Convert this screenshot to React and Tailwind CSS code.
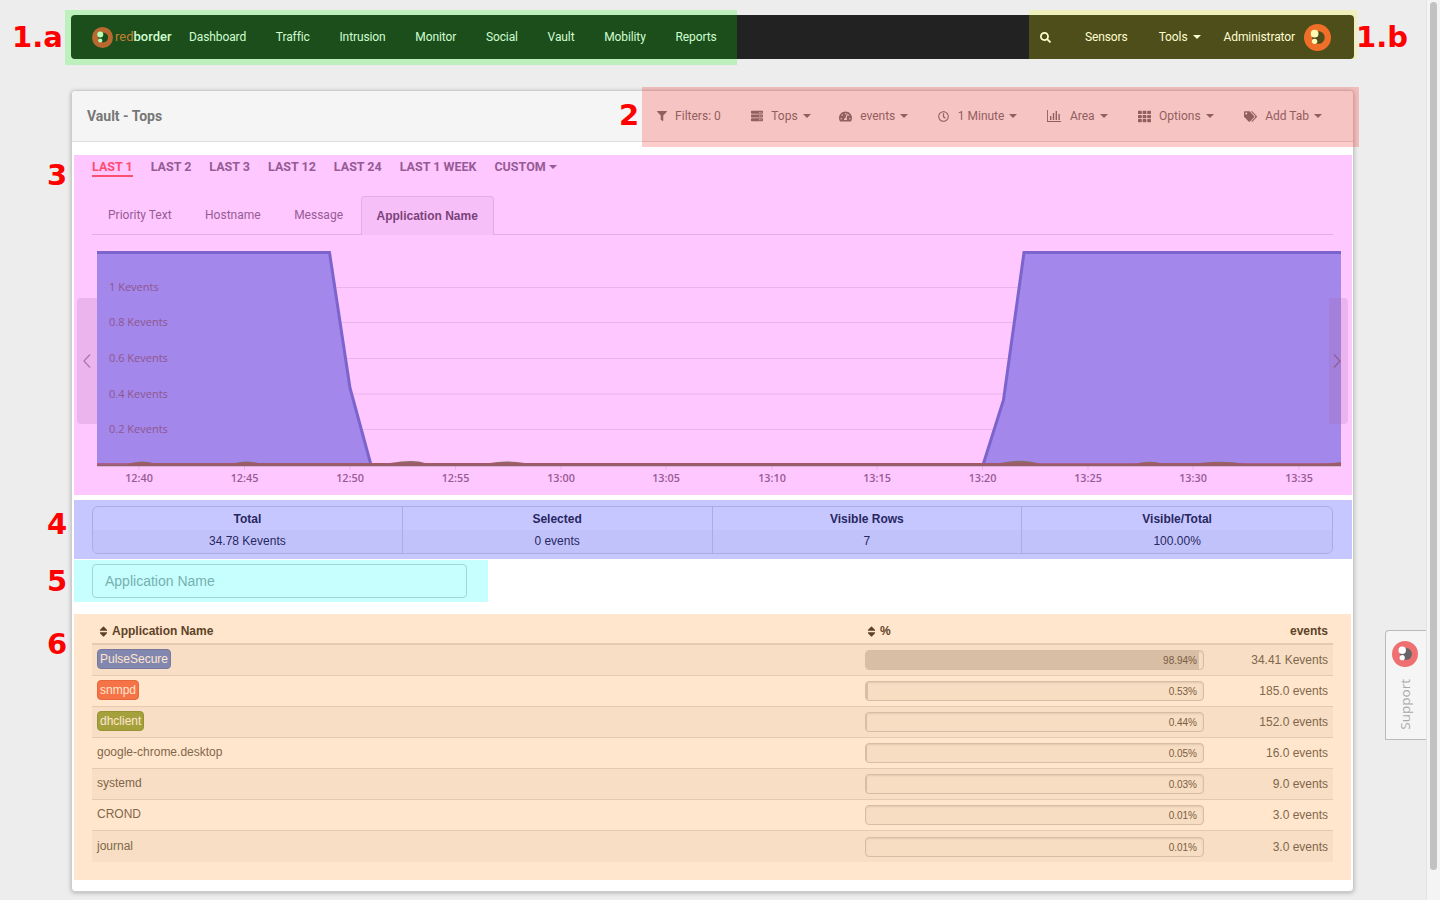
import React from 'react';
import { FaFilter, FaServer, FaTachometerAlt, FaRegClock, FaTh, FaTags, FaSearch, FaSort } from 'react-icons/fa';

const navLeft = ['Dashboard', 'Traffic', 'Intrusion', 'Monitor', 'Social', 'Vault', 'Mobility', 'Reports'];
const ranges = ['LAST 2', 'LAST 3', 'LAST 12', 'LAST 24', 'LAST 1 WEEK'];
const tabs = ['Priority Text', 'Hostname', 'Message'];
const gridY = [287.5, 322.5, 358.5, 394, 429.5];
const yLabels = ['1 Kevents', '0.8 Kevents', '0.6 Kevents', '0.4 Kevents', '0.2 Kevents'];
const xTicks = [
  [139, '12:40'], [244.5, '12:45'], [350, '12:50'], [455.5, '12:55'], [561, '13:00'], [666, '13:05'],
  [772, '13:10'], [877, '13:15'], [982.5, '13:20'], [1088, '13:25'], [1193, '13:30'], [1299, '13:35'],
];
const stats = [
  ['Total', '34.78 Kevents'],
  ['Selected', '0 events'],
  ['Visible Rows', '7'],
  ['Visible/Total', '100.00%'],
];
const rows = [
  { name: 'PulseSecure', color: 'bg-[#6389db] border-[#5577c4]', pct: '98.94%', width: 98.94, value: '34.41 Kevents' },
  { name: 'snmpd', color: 'bg-[#f37058] border-[#e0614a]', pct: '0.53%', width: 0.53, value: '185.0 events' },
  { name: 'dhclient', color: 'bg-[#8ea84b] border-[#7f983f]', pct: '0.44%', width: 0.44, value: '152.0 events' },
  { name: 'google-chrome.desktop', pct: '0.05%', width: 0.05, value: '16.0 events' },
  { name: 'systemd', pct: '0.03%', width: 0.03, value: '9.0 events' },
  { name: 'CROND', pct: '0.01%', width: 0.01, value: '3.0 events' },
  { name: 'journal', pct: '0.01%', width: 0.01, value: '3.0 events' },
];
const tools = [
  { label: 'Tops', icon: <FaServer size={12} />, cls: '-mr-[2px]' },
  { label: 'events', icon: <FaTachometerAlt size={13} /> },
  { label: '1 Minute', icon: <FaRegClock size={11} /> },
  { label: 'Area', icon: <BarsIcon /> },
  { label: 'Options', icon: <FaTh size={13} /> },
  { label: 'Add Tab', icon: <FaTags size={13} /> },
];

// annotation boxes laid over the screenshot
const overlays = [
  'left-[65px] top-[10px] w-[672px] h-[55px] bg-[rgba(0,255,0,0.2)]',
  'left-[1029px] top-[10px] w-[328px] h-[49px] bg-[rgba(255,255,0,0.2)]',
  'left-[642px] top-[87px] w-[717px] h-[60px] bg-[rgba(255,0,0,0.2)]',
  'left-[74px] top-[155px] w-[1278px] h-[340px] bg-[rgba(255,0,255,0.22)]',
  'left-[74px] top-[500px] w-[1278px] h-[59px] bg-[rgba(0,0,255,0.22)]',
  'left-[74px] top-[560px] w-[414px] h-[42px] bg-[rgba(0,255,255,0.22)]',
  'left-[74px] top-[614px] w-[1277px] h-[266px] bg-[rgba(255,128,0,0.2)]',
];
const marks = [
  ['1.a', 'left-[12px] top-[17px]'],
  ['1.b', 'left-[1356px] top-[17px]'],
  ['2', 'left-[619px] top-[95px]'],
  ['3', 'left-[47px] top-[155px]'],
  ['4', 'left-[47px] top-[504px]'],
  ['5', 'left-[47px] top-[561px]'],
  ['6', 'left-[47px] top-[624px]'],
];

function BarsIcon() {
  return (
    <svg width="14" height="12" viewBox="0 0 14 12" fill="currentColor">
      <path d="M0 0h.9v11H14v1H0z" />
      <path d="M3 6h1.4v4H3zM5.8 3h1.4v7H5.8zM8.6 1H10v9H8.6zM11.4 4h1.4v6h-1.4z" />
    </svg>
  );
}

function Caret({ className = 'text-[#777]' }) {
  return <span className={`inline-block w-0 h-0 border-x-4 border-x-transparent border-t-4 border-t-current ${className}`} />;
}

function LogoMark({ className, dot, inner = '#222' }) {
  return (
    <svg viewBox="0 0 28 28" className={className}>
      <circle cx="14" cy="14" r="14" fill="currentColor" />
      <circle cx="15" cy="14" r="6.5" fill={inner} />
      <circle cx="11" cy="10" r="4" fill={dot} />
      <circle cx="11" cy="18" r="2.8" fill={dot} />
    </svg>
  );
}

function Navbar() {
  return (
    <nav className="h-11 bg-[#222] rounded flex items-center justify-between font-['Roboto',sans-serif] text-xs tracking-[-0.1px] text-white">
      <div className="flex items-center">
        <div className="flex items-center ml-[21px] w-[97px]">
          <LogoMark className="w-[21px] h-[21px] text-[#e8443c]" dot="#e6ffe6" />
          <span className="ml-[2px] text-[13px] tracking-normal">
            <span className="text-[#f0603a]">red</span>
            <span className="font-medium">border</span>
          </span>
        </div>
        <div className="flex items-center gap-[29.7px]">
          {navLeft.map((item) => (
            <span key={item}>{item}</span>
          ))}
        </div>
      </div>
      <div className="flex items-center">
        <FaSearch size={11} />
        <span className="ml-[34px]">Sensors</span>
        <span className="ml-[31px]">Tools</span>
        <Caret className="ml-[5px] text-white" />
        <span className="ml-[23px]">Administrator</span>
        <LogoMark className="ml-[9px] mr-[23px] w-[27px] h-[27px] text-[#ec4a32]" dot="#fffbe0" />
      </div>
    </nav>
  );
}

function PanelHeader() {
  return (
    <div className="h-[51px] bg-[#f5f5f5] border-b border-[#ddd] rounded-t flex items-center justify-between pl-[15px] pr-[31px] text-[#777] font-['Roboto',sans-serif] text-xs">
      <h1 className="text-sm font-bold">Vault - Tops</h1>
      <div className="flex items-center gap-[30px]">
        <div className="flex items-center gap-2">
          <FaFilter size={10} />
          <span>Filters: 0</span>
        </div>
        {tools.map((tool) => (
          <div key={tool.label} className={`flex items-center ${tool.cls || ''}`}>
            {tool.icon}
            <span className="ml-[8.5px]">{tool.label}</span>
            <Caret className="ml-[5px]" />
          </div>
        ))}
      </div>
    </div>
  );
}

function TimeRanges() {
  return (
    <div className="h-[54px] pt-[17px] flex items-start gap-[18px] text-[12.5px] font-bold text-[#777] font-['Roboto',sans-serif]">
      <span className="h-[18px] text-[#fb6548] border-b-2 border-[#fb6548] leading-[16px]">LAST 1</span>
      {ranges.map((r) => (
        <span key={r} className="leading-[16px]">{r}</span>
      ))}
      <span className="leading-[16px] flex items-center gap-[3px] h-4">
        CUSTOM
        <Caret />
      </span>
    </div>
  );
}

function Tabs() {
  return (
    <div className="h-[39px] border-b border-[#ddd] flex items-end gap-[1.5px] text-xs text-[#777] font-['Roboto',sans-serif]">
      {tabs.map((t) => (
        <span key={t} className="h-[38px] px-4 flex items-center">{t}</span>
      ))}
      <span className="h-[39px] -mb-px px-[15px] flex items-center font-bold font-['Liberation_Sans',sans-serif] text-[#555] bg-[#f5f5f5] border border-[#ddd] border-b-0 rounded-t">
        Application Name
      </span>
    </div>
  );
}

function AreaChart() {
  return (
    <div className="relative h-[260px] -mx-5">
      <svg width="1281" height="260" viewBox="72 235 1281 260" className="block font-['Open_Sans',sans-serif]">
        {gridY.map((y) => (
          <line key={y} x1="97" x2="1341" y1={y} y2={y} stroke="#e6e6e6" />
        ))}
        {xTicks.map(([x]) => (
          <line key={x} x1={x} x2={x} y1="465" y2="470" stroke="#e6e6e6" />
        ))}
        <polygon points="97,252.5 329.5,252.5 350,388 371,465 97,465" fill="#85aae4" fillOpacity="0.96" />
        <polygon points="983,465 1003.5,400 1024,252.5 1341,252.5 1341,465" fill="#85aae4" fillOpacity="0.96" />
        <polyline points="97,252.5 329.5,252.5 350,388 371,465" fill="none" stroke="#5880bf" strokeWidth="3" />
        <polyline points="983,465 1003.5,400 1024,252.5 1341,252.5" fill="none" stroke="#5880bf" strokeWidth="3" />
        <path
          d="M97 465 H125 Q139 459 153 463 H235 Q245 460 258 463 H390 Q414 459 425 463 H490 Q505 460 525 463 H600 H1000 Q1022 458 1040 464 H1135 Q1148 460 1160 463 H1200 Q1225 460 1245 464 H1325 L1341 462 V466 H97 Z"
          fill="#6c8a3a"
        />
        <line x1="97" x2="1341" y1="464" y2="464" stroke="#986645" strokeWidth="1.5" />
        <line x1="97" x2="1341" y1="465.5" y2="465.5" stroke="#6c803e" strokeWidth="1.5" />
        {yLabels.map((label, i) => (
          <text key={label} x="109" y={gridY[i] + 3.5} fontSize="11" fill="#6f6f6f">{label}</text>
        ))}
        {xTicks.map(([x, label]) => (
          <text key={label} x={x} y="482" fontSize="10.8" fontWeight="600" fill="#777" textAnchor="middle">{label}</text>
        ))}
      </svg>
      <div className="absolute left-[5px] top-[63px] w-5 h-[126px] bg-[#888]/20 rounded-l flex items-center justify-center">
        <svg width="10" height="16" viewBox="0 0 10 16" fill="none" stroke="#999" strokeWidth="1.3"><path d="M8 1.5 2 8l6 6.5" /></svg>
      </div>
      <div className="absolute left-[1257px] top-[63px] w-[19px] h-[126px] bg-[#888]/20 rounded-r flex items-center justify-center pr-[3px]">
        <svg width="10" height="16" viewBox="0 0 10 16" fill="none" stroke="#777" strokeWidth="1.3"><path d="M2 1.5 8 8l-6 6.5" /></svg>
      </div>
    </div>
  );
}

function Stats() {
  return (
    <div className="grid grid-cols-4 mt-[11px] border border-[#ddd] rounded-md overflow-hidden text-xs text-[#333]">
      {stats.map(([title, value], i) => (
        <div key={title} className={`text-center ${i < 3 ? 'border-r border-[#ddd]' : ''}`}>
          <div className="h-[23px] leading-[25px] font-bold">{title}</div>
          <div className="h-[23px] leading-[23px] bg-[#f9f9f9]">{value}</div>
        </div>
      ))}
    </div>
  );
}

function DataTable() {
  return (
    <div className="mt-[17px] text-xs text-[#5f5f5f]">
      <div className="grid grid-cols-[768px_349px_124px] h-[30px] pt-1 items-center border-b-2 border-[#ddd] font-bold text-[#333]">
        <div className="pl-[5px] flex items-center gap-[2px]">
          <FaSort size={13} />
          <span>Application Name</span>
        </div>
        <div className="pl-[5px] flex items-center gap-[2px]">
          <FaSort size={13} />
          <span>%</span>
        </div>
        <div className="pr-[5px] text-right">events</div>
      </div>
      {rows.map((row, i) => (
        <div
          key={row.name}
          className={`grid grid-cols-[768px_349px_124px] h-[31px] items-center border-b border-[#ddd] last:border-b-0 ${i % 2 === 0 ? 'bg-[#f5f5f5]' : ''}`}
        >
          <div className="pl-[5px] -mt-0.5">
            {row.color ? (
              <span className={`inline-block h-5 leading-[18px] px-[2px] border rounded text-[#fff] ${row.color}`}>{row.name}</span>
            ) : (
              row.name
            )}
          </div>
          <div className="pl-[5px] pr-[5px]">
            <div className="relative h-5 bg-[#f5f4f2] border border-[#ccc] rounded shadow-[inset_0_1px_2px_rgba(0,0,0,0.1)] overflow-hidden">
              <div className="h-full bg-[#cfcdce]" style={{ width: `${row.width}%` }} />
              <span className="absolute right-[6px] top-[3px] text-[10px] leading-[14px] text-[#555]">{row.pct}</span>
            </div>
          </div>
          <div className="pr-[5px] text-right">{row.value}</div>
        </div>
      ))}
    </div>
  );
}

function SupportTab() {
  return (
    <div className="absolute left-[1385px] top-[630px] w-[41px] h-[110px] bg-[#f5f5f5] border border-r-0 border-[#bbb] rounded-tl flex flex-col items-center pt-[10px] pr-[2px]">
      <LogoMark className="w-[26px] h-[26px] text-[#ee7070]" dot="#fff" inner="#666" />
      <span className="mt-[12px] [writing-mode:vertical-rl] rotate-180 text-[13.5px] text-[#aaa] font-['Open_Sans',sans-serif]">Support</span>
    </div>
  );
}

export default function App() {
  return (
    <div className="relative w-[1440px] h-[900px] overflow-hidden bg-[#ededed] flex font-['Liberation_Sans',sans-serif]">
      <main className="w-[1426px] pt-[15px] pl-[71px] pr-[72px]">
        <Navbar />
        <section className="mt-[31px] h-[802px] bg-white border border-[#ccc] rounded shadow-[0_1px_4px_rgba(0,0,0,0.25)]">
          <PanelHeader />
          <div className="px-5">
            <TimeRanges />
            <Tabs />
            <AreaChart />
            <Stats />
            <input
              placeholder="Application Name"
              className="block mt-[10px] w-[375px] h-[34px] px-3 text-sm border border-[#ccc] rounded placeholder:text-[#999] bg-white"
            />
            <DataTable />
          </div>
        </section>
      </main>
      <aside className="w-[14px] bg-[#f4f4f4] border-l border-[#e4e4e4] pt-[2px] pl-[3px]">
        <div className="w-[7px] h-[868px] rounded bg-[#c2c2c2]" />
      </aside>
      <SupportTab />
      {overlays.map((cls) => (
        <div key={cls} className={`absolute pointer-events-none ${cls}`} />
      ))}
      {marks.map(([text, cls]) => (
        <span key={text} className={`absolute text-[29px] leading-[40px] font-bold text-[#f00] font-['DejaVu_Sans',sans-serif] ${cls}`}>
          {text}
        </span>
      ))}
    </div>
  );
}
